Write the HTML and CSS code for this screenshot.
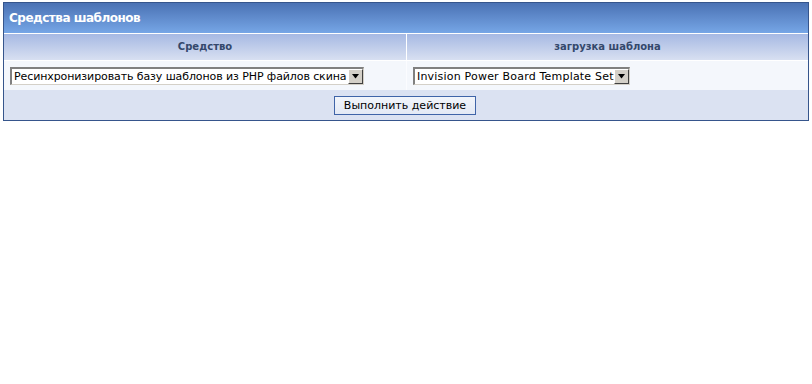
FILE: index.html
```html
<!DOCTYPE html>
<html lang="ru">
<head>
<meta charset="utf-8">
<title>Средства шаблонов</title>
<link rel="stylesheet" href="styles.css">
</head>
<body>
<div class="box">
  <div class="title">Средства шаблонов</div>
  <div class="cols">
    <div class="colhead">Средство</div>
    <div class="colhead">загрузка шаблона</div>
  </div>
  <div class="row1">
    <div class="cell">
      <div class="sel sel-wide"><span class="sel-text">Ресинхронизировать базу шаблонов из PHP файлов скина</span><span class="arrow"><svg width="9" height="5" viewBox="0 0 9 5"><path d="M1 0h7L4.5 4.5z" fill="#000"/></svg></span></div>
    </div>
    <div class="cell">
      <div class="sel"><span class="sel-text sel-text-latin">Invision Power Board Template Set</span><span class="arrow"><svg width="9" height="5" viewBox="0 0 9 5"><path d="M1 0h7L4.5 4.5z" fill="#000"/></svg></span></div>
    </div>
  </div>
  <div class="row2">
    <button class="btn" type="button">Выполнить действие</button>
  </div>
</div>
</body>
</html>
```

FILE: styles.css
```css
html, body {
  margin: 0;
  padding: 0;
  background: #ffffff;
}
body {
  font-family: "DejaVu Sans", Verdana, sans-serif;
}
.box {
  margin: 2px 0 0 3px;
  width: 806px;
  box-sizing: border-box;
  border: 1px solid #36558c;
  background: #dbe2f2;
}
.title {
  height: 30px;
  line-height: 30px;
  padding-left: 5px;
  color: #ffffff;
  font-weight: bold;
  font-size: 12px;
  letter-spacing: -0.5px;
  background: linear-gradient(to bottom, #4b72b4, #76a6e6);
}
.cols {
  display: grid;
  grid-template-columns: 402px 1fr;
  column-gap: 1px;
  background: #ffffff;
  border-top: 1px solid #ffffff;
  border-bottom: 1px solid #ffffff;
}
.colhead {
  height: 26px;
  line-height: 26px;
  text-align: center;
  font-size: 10px;
  font-weight: bold;
  color: #34486c;
  background: linear-gradient(to bottom, #a6b9e3, #d8e0f1);
}
.row1 {
  display: grid;
  grid-template-columns: 402px 1fr;
  column-gap: 1px;
  background: #fbfcff;
  height: 29px;
}
.cell {
  display: flex;
  align-items: center;
  padding-left: 6px;
  background: #f4f7fc;
}
.sel {
  display: flex;
  align-items: center;
  height: 18px;
  box-sizing: border-box;
  border-top: 2px solid #808080;
  border-left: 2px solid #808080;
  border-right: 1px solid #d4d0c8;
  border-bottom: 1px solid #d4d0c8;
  background: #ffffff;
  width: 217px;
  padding-left: 2px;
  font-size: 11px;
  color: #000000;
}
.sel-wide {
  width: 354px;
}
.sel-text {
  flex: 1;
  white-space: nowrap;
  overflow: hidden;
  letter-spacing: -0.1px;
}
.sel-text-latin {
  letter-spacing: 0.2px;
}
.arrow {
  display: flex;
  align-items: center;
  justify-content: center;
  width: 15px;
  height: 15px;
  box-sizing: border-box;
  background: #d4d0c8;
  border-top: 1px solid #ffffff;
  border-left: 1px solid #ffffff;
  border-right: 1px solid #404040;
  border-bottom: 1px solid #404040;
}
.row2 {
  height: 30px;
  display: flex;
  justify-content: center;
  align-items: center;
  background: #dbe2f2;
}
.btn {
  width: 142px;
  height: 19px;
  margin-left: -2px;
  padding: 0;
  border: 1px solid #3f64a8;
  background: linear-gradient(to bottom, #f2f5fb, #e3e9f5);
  font-family: "DejaVu Sans", Verdana, sans-serif;
  font-size: 11px;
  color: #000000;
}
```
